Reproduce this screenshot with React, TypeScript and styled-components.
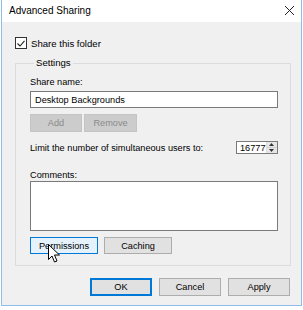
import React from 'react'
import styled, { createGlobalStyle } from 'styled-components'

const Global = createGlobalStyle`
  html, body {
    margin: 0;
    background: #ffffff;
  }
  body {
    font-family: "Liberation Sans", Arial, sans-serif;
    font-size: 9.2px;
    color: #000;
  }
`

const Window = styled.div`
  width: 299px;
  height: 305px;
  margin-left: 1px;
  border: 1px solid #8dbde8;
  border-top: none;
  background: #f0f0f0;
  display: flex;
  flex-direction: column;
  overflow: hidden;
`

const TitleBar = styled.div`
  height: 22px;
  flex: none;
  background: #ffffff;
  display: flex;
  align-items: center;
  justify-content: space-between;
  padding: 0 6px 2px 7px;
  box-sizing: border-box;
  font-size: 10px;
`

const Close = styled.svg`
  width: 11px;
  height: 11px;
`

const Body = styled.div`
  position: relative;
  flex: 1;
  padding: 15px 10px 0 13px;
  display: flex;
  flex-direction: column;
`

const CheckRow = styled.label`
  display: flex;
  align-items: center;
  gap: 4px;
  height: 12px;
  font-size: 9.6px;
`

const CheckBox = styled.span`
  width: 10px;
  height: 10px;
  border: 1px solid #333;
  background: #fff;
  display: flex;
  align-items: center;
  justify-content: center;
`

const Group = styled.fieldset`
  margin: 6px 0 0 0;
  width: 276px;
  box-sizing: border-box;
  border: 1px solid #dcdcdc;
  padding: 6px 11px 11px 14px;
  display: flex;
  flex-direction: column;
`

const Legend = styled.legend`
  padding: 0 2px;
  margin-left: 4px;
  line-height: 16px;
  font-size: 9.6px;
`

const Label = styled.div<{ $mt?: number }>`
  margin-top: ${p => p.$mt ?? 0}px;
  line-height: 11px;
  height: 11px;
`

const TextField = styled.div<{ $h: number; $mt: number }>`
  margin-top: ${p => p.$mt}px;
  width: 248px;
  height: ${p => p.$h}px;
  box-sizing: border-box;
  border: 1px solid #7a7a7a;
  background: #fff;
  padding: 0 4px;
  display: flex;
  align-items: ${p => (p.$h > 20 ? 'flex-start' : 'center')};
`

const ButtonRow = styled.div<{ $gap: number; $mt: number }>`
  display: flex;
  gap: ${p => p.$gap}px;
  margin-top: ${p => p.$mt}px;
`

type Variant = 'normal' | 'disabled' | 'hover' | 'default'

const Button = styled.div<{ $w: number; $h?: number; $variant?: Variant }>`
  width: ${p => p.$w}px;
  height: ${p => p.$h ?? 18}px;
  box-sizing: border-box;
  display: flex;
  align-items: center;
  justify-content: center;
  background: ${p =>
    p.$variant === 'disabled' ? '#cccccc' : p.$variant === 'hover' ? '#e5f1fb' : '#e1e1e1'};
  border: ${p =>
    p.$variant === 'default'
      ? '2px solid #0078d7'
      : p.$variant === 'hover'
      ? '1px solid #0078d7'
      : p.$variant === 'disabled'
      ? '1px solid #c4c4c4'
      : '1px solid #adadad'};
  color: ${p => (p.$variant === 'disabled' ? '#8a8a8a' : '#000')};
`

const LimitRow = styled.div`
  display: flex;
  align-items: center;
  justify-content: space-between;
  height: 13px;
  margin-top: 9px;
  padding-right: 1px;
`

const Spin = styled.div`
  width: 42px;
  height: 13px;
  box-sizing: border-box;
  border: 1px solid #7a7a7a;
  background: #fff;
  display: flex;
`

const SpinValue = styled.div`
  flex: 1;
  display: flex;
  align-items: center;
  padding-left: 3px;
`

const SpinArrows = styled.div`
  width: 11px;
  display: flex;
  flex-direction: column;
  border-left: 1px solid #dcdcdc;
`

const SpinArrow = styled.div`
  flex: 1;
  background: #e6e6e6;
  display: flex;
  align-items: center;
  justify-content: center;
  &:first-child {
    border-bottom: 1px solid #cfcfcf;
  }
`

const Footer = styled.div`
  display: flex;
  justify-content: flex-end;
  gap: 7px;
  margin-top: 12px;
  padding-right: 1px;
`

const Cursor = styled.svg`
  position: absolute;
  left: 46px;
  top: 222px;
  width: 12px;
  height: 19px;
`

export default function App() {
  return (
    <>
      <Global />
      <Window>
        <TitleBar>
          <span>Advanced Sharing</span>
          <Close viewBox="0 0 11 11">
            <path d="M1 1 L10 10 M10 1 L1 10" stroke="#222" strokeWidth="1" />
          </Close>
        </TitleBar>
        <Body>
          <CheckRow>
            <CheckBox>
              <svg width="8" height="7" viewBox="0 0 8 7">
                <path d="M0.5 3.5 L3 6 L7.5 0.8" fill="none" stroke="#222" strokeWidth="1.1" />
              </svg>
            </CheckBox>
            Share this folder
          </CheckRow>
          <Group>
            <Legend>Settings</Legend>
            <Label>Share name:</Label>
            <TextField $h={17} $mt={3}>Desktop Backgrounds</TextField>
            <ButtonRow $gap={2} $mt={6}>
              <Button $w={52} $variant="disabled">Add</Button>
              <Button $w={53} $variant="disabled">Remove</Button>
            </ButtonRow>
            <LimitRow>
              <span>Limit the number of simultaneous users to:</span>
              <Spin>
                <SpinValue>16777</SpinValue>
                <SpinArrows>
                  <SpinArrow>
                    <svg width="5" height="3" viewBox="0 0 5 3"><path d="M0 3 L2.5 0 L5 3Z" fill="#333" /></svg>
                  </SpinArrow>
                  <SpinArrow>
                    <svg width="5" height="3" viewBox="0 0 5 3"><path d="M0 0 L2.5 3 L5 0Z" fill="#333" /></svg>
                  </SpinArrow>
                </SpinArrows>
              </Spin>
            </LimitRow>
            <Label $mt={16}>Comments:</Label>
            <TextField $h={50} $mt={0} />
            <ButtonRow $gap={6} $mt={6}>
              <Button $w={68} $h={17} $variant="hover">Permissions</Button>
              <Button $w={68} $h={17}>Caching</Button>
            </ButtonRow>
          </Group>
          <Footer>
            <Button $w={62} $variant="default">OK</Button>
            <Button $w={62}>Cancel</Button>
            <Button $w={62}>Apply</Button>
          </Footer>
          <Cursor viewBox="0 0 12 19">
            <path d="M0.5 0.5 L0.5 15.5 L4 12 L6.5 18 L9 17 L6.5 11 L11.5 11 Z" fill="#fff" stroke="#000" strokeWidth="1" />
          </Cursor>
        </Body>
      </Window>
    </>
  )
}
